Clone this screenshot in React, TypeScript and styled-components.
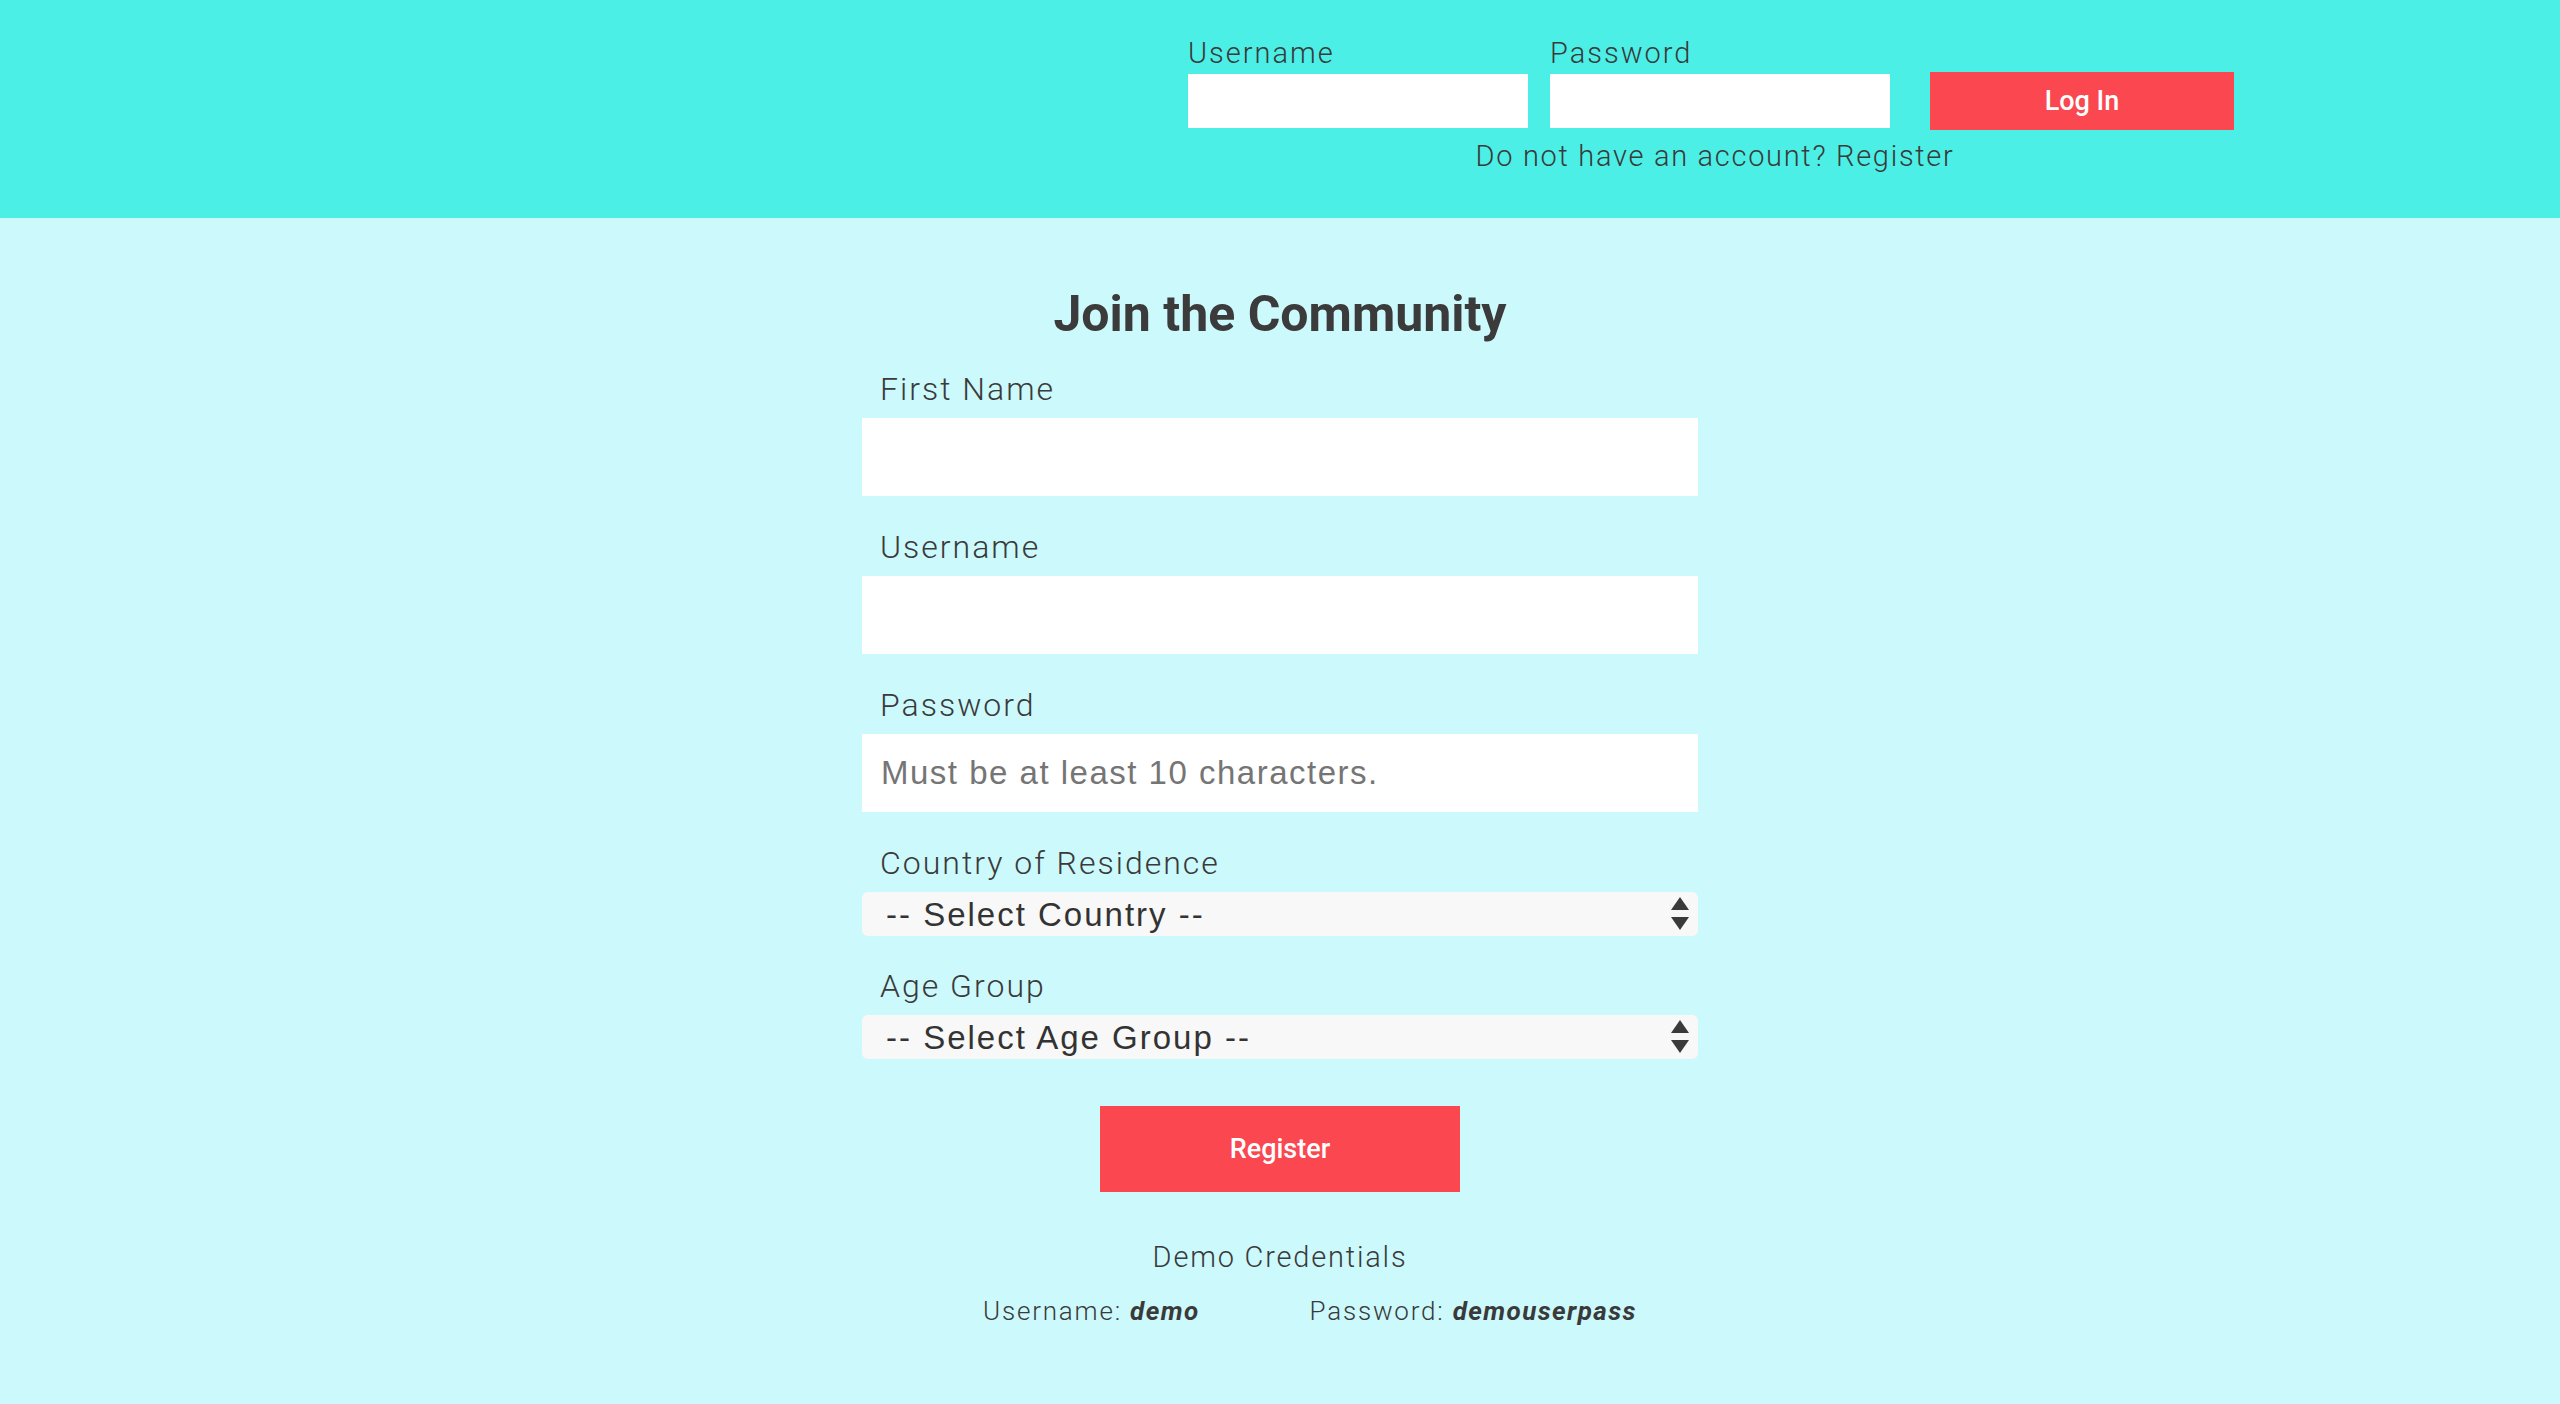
import React from "react";
import styled, { createGlobalStyle } from "styled-components";

const GlobalStyle = createGlobalStyle`
  html, body {
    margin: 0;
    padding: 0;
    background: #ccf9fc;
  }
  body {
    font-family: Roboto, "Liberation Sans", sans-serif;
    color: #3a3a3a;
  }
  * { box-sizing: border-box; }
`;

const Page = styled.div`
  min-height: 1404px;
  background: #ccf9fc;
  display: flex;
  flex-direction: column;
`;

const Header = styled.header`
  height: 218px;
  background: #4cefe6;
  display: flex;
  justify-content: flex-end;
  padding: 36px 326px 0 0;
`;

const LoginForm = styled.form`
  display: grid;
  grid-template-columns: 340px 340px 322px;
  grid-template-rows: auto auto auto;
  column-gap: 22px;
  align-items: center;
  align-content: start;
`;

const HeaderLabel = styled.label`
  font-family: Roboto, sans-serif;
  font-weight: 300;
  font-size: 29px;
  line-height: 35px;
  letter-spacing: 2px;
  color: #3a3a3a;
  align-self: end;
  margin-bottom: 1px;
`;

const HeaderInput = styled.input`
  width: 340px;
  height: 54px;
  border: none;
  outline: none;
  background: #ffffff;
  padding: 0 12px;
  font-size: 22px;
`;

const LoginButton = styled.button`
  grid-column: 3;
  grid-row: 2;
  margin-left: 18px;
  width: 304px;
  height: 58px;
  border: none;
  background: #fb4750;
  color: #ffffff;
  font-family: Roboto, sans-serif;
  font-weight: 500;
  font-size: 27px;
  cursor: pointer;
`;

const SignupHint = styled.p`
  grid-column: 1 / -1;
  margin: 9px 0 0;
  text-align: center;
  font-family: Roboto, sans-serif;
  font-weight: 300;
  font-size: 29px;
  line-height: 35px;
  letter-spacing: 1.7px;
  color: #3a3a3a;
  padding-left: 8px;
`;

const Main = styled.main`
  display: flex;
  flex-direction: column;
  align-items: center;
  padding-top: 66px;
`;

const Title = styled.h1`
  margin: 0 0 26px;
  font-family: Roboto, sans-serif;
  font-weight: 700;
  font-size: 50px;
  line-height: 60px;
  color: #3b3b3b;
  text-align: center;
`;

const SignupForm = styled.form`
  width: 836px;
  display: flex;
  flex-direction: column;
  align-items: stretch;
`;

const Field = styled.div<{ $gap?: number }>`
  display: flex;
  flex-direction: column;
  margin-bottom: ${(p) => p.$gap ?? 32}px;
`;

const FieldLabel = styled.label`
  font-family: Roboto, sans-serif;
  font-weight: 300;
  font-size: 32px;
  line-height: 38px;
  letter-spacing: 2px;
  color: #3a3a3a;
  padding-left: 18px;
  margin-bottom: 10px;
`;

const TextInput = styled.input`
  height: 78px;
  border: none;
  outline: none;
  background: #ffffff;
  padding: 0 19px;
  font-family: "Liberation Sans", Arial, sans-serif;
  font-size: 33px;
  letter-spacing: 1.5px;
  color: #333;
  &::placeholder {
    color: #757575;
  }
`;

const SelectWrap = styled.div`
  position: relative;
  height: 44px;
`;

const Select = styled.select`
  appearance: none;
  -webkit-appearance: none;
  width: 100%;
  height: 44px;
  border: none;
  outline: none;
  border-radius: 6px;
  background: #f8f8f8;
  padding: 0 50px 0 24px;
  font-family: "Liberation Sans", Arial, sans-serif;
  font-size: 33px;
  letter-spacing: 2px;
  color: #333333;
`;

const Arrows = styled.svg`
  position: absolute;
  right: 9px;
  top: 50%;
  transform: translateY(-50%);
  pointer-events: none;
`;

const RegisterButton = styled.button`
  align-self: center;
  margin-top: 13px;
  width: 360px;
  height: 86px;
  border: none;
  background: #fb4750;
  color: #ffffff;
  font-family: Roboto, sans-serif;
  font-weight: 500;
  font-size: 27px;
  cursor: pointer;
`;

const DemoTitle = styled.p`
  margin: 48px 0 0;
  font-family: Roboto, sans-serif;
  font-weight: 300;
  font-size: 29px;
  line-height: 35px;
  letter-spacing: 1.8px;
  color: #3a3a3a;
  text-align: center;
`;

const CredRow = styled.div`
  display: flex;
  justify-content: center;
  gap: 110px;
  margin-top: 21px;
  padding-left: 60px;
`;

const Cred = styled.span`
  font-family: Roboto, sans-serif;
  font-weight: 300;
  font-size: 26px;
  line-height: 30px;
  letter-spacing: 1.8px;
  color: #3a3a3a;
  white-space: nowrap;
`;

const CredValue = styled.strong`
  font-weight: 700;
  font-style: italic;
  letter-spacing: 1.4px;
`;

const SelectArrows = () => (
  <Arrows width="18" height="34" viewBox="0 0 18 34" aria-hidden="true">
    <polygon points="9,0 18,13 0,13" fill="#3a3a3a" />
    <polygon points="0,20 18,20 9,33" fill="#3a3a3a" />
  </Arrows>
);

export default function App() {
  return (
    <>
      <GlobalStyle />
      <Page>
        <Header>
          <LoginForm onSubmit={(e) => e.preventDefault()}>
            <HeaderLabel htmlFor="login-username">Username</HeaderLabel>
            <HeaderLabel htmlFor="login-password">Password</HeaderLabel>
            <span />
            <HeaderInput id="login-username" type="text" />
            <HeaderInput id="login-password" type="password" />
            <LoginButton type="submit">Log In</LoginButton>
            <SignupHint>Do not have an account? Register</SignupHint>
          </LoginForm>
        </Header>
        <Main>
          <Title>Join the Community</Title>
          <SignupForm onSubmit={(e) => e.preventDefault()}>
            <Field>
              <FieldLabel htmlFor="first-name">First Name</FieldLabel>
              <TextInput id="first-name" type="text" />
            </Field>
            <Field>
              <FieldLabel htmlFor="su-username">Username</FieldLabel>
              <TextInput id="su-username" type="text" />
            </Field>
            <Field>
              <FieldLabel htmlFor="su-password">Password</FieldLabel>
              <TextInput
                id="su-password"
                type="password"
                placeholder="Must be at least 10 characters."
              />
            </Field>
            <Field $gap={31}>
              <FieldLabel htmlFor="country">Country of Residence</FieldLabel>
              <SelectWrap>
                <Select id="country" defaultValue="">
                  <option value="">-- Select Country --</option>
                </Select>
                <SelectArrows />
              </SelectWrap>
            </Field>
            <Field $gap={34}>
              <FieldLabel htmlFor="age">Age Group</FieldLabel>
              <SelectWrap>
                <Select id="age" defaultValue="">
                  <option value="">-- Select Age Group --</option>
                </Select>
                <SelectArrows />
              </SelectWrap>
            </Field>
            <RegisterButton type="submit">Register</RegisterButton>
          </SignupForm>
          <DemoTitle>Demo Credentials</DemoTitle>
          <CredRow>
            <Cred>
              Username: <CredValue>demo</CredValue>
            </Cred>
            <Cred>
              Password: <CredValue>demouserpass</CredValue>
            </Cred>
          </CredRow>
        </Main>
      </Page>
    </>
  );
}
